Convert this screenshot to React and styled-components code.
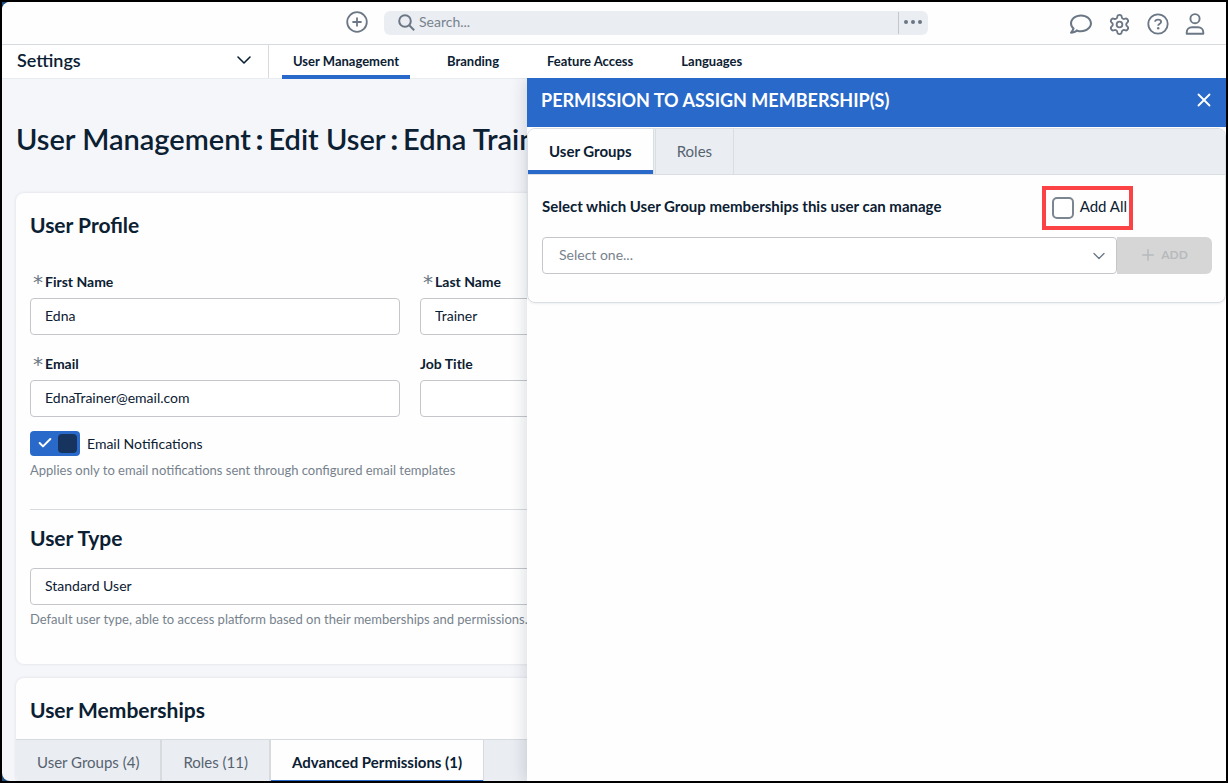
import React, { useState } from 'react';
import styled, { createGlobalStyle } from 'styled-components';
import { FaRegComment } from 'react-icons/fa';
import { Check, ChevronDown, Plus, Settings, X } from 'lucide-react';

const GlobalStyle = createGlobalStyle`
  * {
    box-sizing: border-box;
  }

  body {
    margin: 0;
    color: #0b2032;
    font-family: Lato, "Open Sans", sans-serif;
    font-size: 14px;
    line-height: 20px;
  }

  button, input, select {
    font: inherit;
    color: inherit;
  }

  h1, h2, p {
    margin: 0;
  }
`;

const Frame = styled.div`
  height: 100vh;
  border: 2px solid #000;
  background: #1d4f80;
`;

const Shell = styled.div`
  position: relative;
  display: flex;
  flex-direction: column;
  height: 100%;
  overflow: hidden;
  background: #f5f6fa;
  border-radius: 8px 0 0 8px;
`;

const TopBar = styled.header`
  display: grid;
  grid-template-columns: 1fr auto 1fr;
  flex: none;
  height: 43px;
  padding: 0 21px 1px 46px;
  background: #fefefe;
  border-bottom: 1px solid #d8dbde;
`;

const TopCenter = styled.div`
  grid-column: 2;
  display: flex;
  align-items: center;
  gap: 16px;
  margin-right: -21px;
`;

const IconButton = styled.button`
  display: flex;
  align-items: center;
  justify-content: center;
  padding: 0;
  border: none;
  background: none;
  color: ${({ $color }) => $color || '#6b7785'};
  cursor: pointer;
`;

const CreateButton = styled(IconButton)`
  padding-bottom: 2px;
`;

const SearchBox = styled.div`
  display: flex;
  align-items: center;
  width: min(544px, 50vw);
  height: 24px;
  padding-left: 14px;
  border-radius: 6px;
  background: #eaedf2;
  overflow: hidden;

  svg {
    flex: none;
  }

  input {
    flex: 1;
    min-width: 0;
    height: 22px;
    padding: 0 4px 2px;
    border: none;
    outline: none;
    background: none;

    &::placeholder {
      color: #77828d;
      opacity: 1;
    }
  }
`;

const MoreButton = styled(IconButton)`
  width: 30px;
  height: 22px;
  padding: 0 2px 2px 0;
  border-left: 1px solid #c4c8cc;
`;

const TopIcons = styled.div`
  grid-column: 3;
  display: flex;
  align-items: center;
  justify-content: flex-end;
  gap: 16px;
  padding-top: 3px;
`;

const SubNav = styled.div`
  display: flex;
  flex: none;
  height: 34px;
  background: #fff;
  border-bottom: 1px solid #e8ebef;
`;

const SectionButton = styled.button`
  display: flex;
  align-items: center;
  justify-content: space-between;
  width: 267px;
  padding: 0 12px 4px 15px;
  border: none;
  border-right: 1px solid #d8dbde;
  background: none;
  font-size: 18px;
  font-weight: 600;
`;

const NavLinks = styled.nav`
  display: flex;
  gap: 26px;
  margin-left: 13px;
`;

const NavItem = styled.a`
  display: flex;
  align-items: center;
  height: 34px;
  padding: 2px 11px 0;
  border-bottom: 4px solid ${({ $active }) => ($active ? '#2869c9' : 'transparent')};
  color: #0b2032;
  font-size: 13px;
  font-weight: 700;
  text-decoration: none;
`;

const Main = styled.main`
  flex: 1;
  min-height: 0;
  padding: 41px 32px 0 14px;
  overflow-y: auto;
  scrollbar-width: none;
`;

const PageTitle = styled.h1`
  display: flex;
  gap: 5px;
  margin-bottom: 35px;
  font-size: 29px;
  font-weight: 600;
  line-height: 38px;
  white-space: nowrap;

  b {
    font-weight: 900;
  }
`;

const Card = styled.section`
  margin-bottom: 14px;
  background: #fefefe;
  border-radius: 8px;
  box-shadow: 0 0 3px rgba(40, 60, 90, 0.14);
  overflow: hidden;
`;

const CardBody = styled.div`
  padding: 18px 14px ${({ $bottom }) => $bottom || 0}px;
`;

const CardTitle = styled.h2`
  font-size: 21px;
  font-weight: 700;
  line-height: 28px;
`;

const FieldGrid = styled.div`
  display: grid;
  grid-template-columns: repeat(3, 1fr);
  gap: 19px 20px;
  margin-top: 33px;
`;

const Field = styled.div`
  display: flex;
  flex-direction: column;
  gap: 6px;

  label {
    display: flex;
    gap: 2px;
    font-weight: 700;
  }

  &:nth-child(2) {
    grid-column: 2 / 4;
    width: calc(50% - 10px);
  }
`;

const Required = styled.span`
  padding-left: 3px;
  color: #6b7785;
  font-family: "DejaVu Sans", sans-serif;
  font-size: 20px;
  font-weight: 400;
`;

const TextInput = styled.input`
  width: 100%;
  height: 37px;
  padding: 0 14px 2px;
  border: 1px solid #c4c6c9;
  border-radius: 4px;
  background: #fff;
`;

const SwitchRow = styled.label`
  display: flex;
  align-items: center;
  gap: 7px;
  margin-top: 14px;
`;

const Switch = styled.span`
  position: relative;
  width: 50px;
  height: 25px;

  input {
    width: 50px;
    height: 25px;
    margin: 0;
    appearance: none;
    border-radius: 4px;
    background: #a9b1ba;

    &:checked {
      background: #2869c9;
    }
  }

  svg {
    position: absolute;
    top: 4px;
    left: 7px;
    color: #fff;
    pointer-events: none;
  }

  &::after {
    content: '';
    position: absolute;
    top: 3px;
    right: 3px;
    width: 19px;
    height: 19px;
    border-radius: 4px;
    background: #17345f;
    pointer-events: none;
  }
`;

const HelpText = styled.p`
  margin-top: 4px;
  color: #77828d;
  font-size: 13px;
`;

const Divider = styled.hr`
  margin: 29px 0 14px;
  border: none;
  border-top: 1px solid #d8dbde;
`;

const SelectBox = styled.div`
  position: relative;
  flex: 1;

  ${CardTitle} + & {
    margin-top: 16px;
  }

  select {
    width: 100%;
    height: 37px;
    padding: 0 ${({ $inset }) => $inset || 14}px 2px;
    appearance: none;
    border: 1px solid #c4c6c9;
    border-radius: 4px;
    background: #fff;
    color: ${({ $muted }) => ($muted ? '#77828d' : 'inherit')};
    opacity: 1;
  }

  svg {
    position: absolute;
    top: 9px;
    right: 8px;
    color: #6b7785;
    pointer-events: none;
  }
`;

const MembershipTabs = styled.div`
  display: flex;
  margin-top: 15px;
  background: #eaedf2;
  border-top: 1px solid #d8dbde;
`;

const MembershipTab = styled.button`
  height: 44px;
  padding: 3px 21px 0;
  border: none;
  border-right: ${({ $active }) => ($active ? 1 : 2)}px solid #d8dbde;
  border-bottom: 4px solid ${({ $active }) => ($active ? '#2869c9' : 'transparent')};
  background: ${({ $active }) => ($active ? '#fefefe' : 'none')};
  color: ${({ $active }) => ($active ? '#0b2032' : '#56636f')};
  font-size: 15px;
  font-weight: ${({ $active }) => ($active ? 700 : 400)};
`;

const Drawer = styled.aside`
  position: absolute;
  top: 76px;
  right: 0;
  bottom: 0;
  width: 699px;
  max-width: 100%;
  background: #fefefe;
  box-shadow: -2px 0 14px rgba(20, 40, 60, 0.16);
  clip-path: inset(0 0 0 -20px);
`;

const DrawerHeader = styled.div`
  display: flex;
  align-items: center;
  justify-content: space-between;
  height: 49px;
  padding: 0 11px 5px 14px;
  background: #2869c9;
  color: #fff;

  h2 {
    font-size: 18px;
    font-weight: 700;
    line-height: 24px;
  }
`;

const Panel = styled.div`
  margin-top: 1px;
  border: 1px solid #d9dee3;
  border-radius: 8px;
  box-shadow: 0 1px 2px rgba(40, 60, 90, 0.08);
  overflow: hidden;
`;

const DrawerTabs = styled.div`
  display: flex;
  gap: 1px;
  height: 46px;
  background: #eaedf2;
  border-bottom: 1px solid #d9dee3;
`;

const DrawerTab = styled.button`
  padding: 0 21px 2px;
  border: solid #d9dee3;
  border-width: 0 1px 0 ${({ $active }) => ($active ? 0 : 1)}px;
  background: ${({ $active }) => ($active ? '#fefefe' : 'none')};
  box-shadow: ${({ $active }) => ($active ? 'inset 0 -4px #2869c9' : 'none')};
  color: ${({ $active }) => ($active ? '#0b2032' : '#56636f')};
  font-size: 15px;
  font-weight: ${({ $active }) => ($active ? 700 : 400)};
`;

const PanelBody = styled.div`
  padding: 11px 13px 28px 14px;
`;

const AssignRow = styled.div`
  display: flex;
  align-items: center;
  justify-content: space-between;
  margin-bottom: 7px;
  padding-right: 79px;
  font-size: 15px;

  > label {
    padding-bottom: 4px;
    font-weight: 700;
  }
`;

const AddAll = styled.div`
  display: flex;
  align-items: center;
  gap: 6px;
  height: 44px;
  padding: 0 2px 0 6px;
  border: 4px solid #fb4245;

  label {
    padding-bottom: 4px;
  }

  input {
    width: 22px;
    height: 22px;
    margin: 0;
    appearance: none;
    border: 2px solid #7b8691;
    border-radius: 5px;
    background: #fff;

    &:checked {
      background: #2869c9;
    }
  }
`;

const AddRow = styled.div`
  display: flex;
`;

const AddButton = styled.button`
  display: flex;
  align-items: center;
  justify-content: center;
  gap: 4px;
  width: 95px;
  height: 37px;
  padding: 0 8px 2px 6px;
  border: none;
  border-radius: 0 6px 6px 0;
  background: #d6d6d6;
  color: #b6babd;
  font-size: 12px;
  font-weight: 700;
`;

const drawerTabs = ['User Groups', 'Roles'];
const membershipTabs = ['User Groups (4)', 'Roles (11)', 'Advanced Permissions (1)'];
const navItems = ['User Management', 'Branding', 'Feature Access', 'Languages'];

const CirclePlusIcon = () => (
  <svg width="22" height="22" viewBox="0 0 22 22" fill="none" stroke="currentColor" strokeWidth="1.8">
    <circle cx="11" cy="11" r="9.8" />
    <path d="M11 6.4v9.2M6.4 11h9.2" />
  </svg>
);

const SearchIcon = () => (
  <svg width="17" height="17" viewBox="0 0 17 17" fill="none" stroke="#6b7785" strokeWidth="2">
    <circle cx="7" cy="7" r="5.8" />
    <path d="M11.2 11.2l5 5" />
  </svg>
);

const DotsIcon = () => (
  <svg width="18" height="4" viewBox="0 0 18 4" fill="currentColor">
    <circle cx="2" cy="2" r="2" />
    <circle cx="9" cy="2" r="2" />
    <circle cx="16" cy="2" r="2" />
  </svg>
);

const HelpIcon = () => (
  <svg width="22" height="22" viewBox="0 0 22 22" fill="none" stroke="currentColor" strokeWidth="1.8">
    <circle cx="11" cy="11" r="9.7" />
    <path d="M8.1 8.8C8.2 7.3 9.3 6.7 11 6.7c1.9 0 3.1.9 3.1 2.3 0 1.8-2.9 1.9-2.9 3.8" />
    <circle cx="11.2" cy="15.3" r="1.2" fill="currentColor" stroke="none" />
  </svg>
);

const UserIcon = () => (
  <svg width="20" height="22" viewBox="0 0 20 22" fill="none" stroke="currentColor" strokeWidth="1.9" strokeLinejoin="round">
    <circle cx="10" cy="5.7" r="4.6" />
    <path d="M1.7 20.8v-1.3c0-3 2.3-5.2 5.2-5.2h6.2c2.9 0 5.2 2.2 5.2 5.2v1.3z" />
  </svg>
);

const FormField = ({ id, label, value, required }) => (
  <Field>
    <label htmlFor={id}>
      {required && <Required>*</Required>}
      {label}
    </label>
    <TextInput id={id} defaultValue={value} />
  </Field>
);

const App = () => {
  const [drawerTab, setDrawerTab] = useState('User Groups');
  const [membershipTab, setMembershipTab] = useState('Advanced Permissions (1)');
  const [open, setOpen] = useState(true);

  return (
    <Frame>
      <GlobalStyle />
      <Shell>
        <TopBar>
          <TopCenter>
            <CreateButton aria-label="Create"><CirclePlusIcon /></CreateButton>
            <SearchBox>
              <SearchIcon />
              <input type="search" aria-label="Search" placeholder="Search..." />
              <MoreButton aria-label="Search options"><DotsIcon /></MoreButton>
            </SearchBox>
          </TopCenter>
          <TopIcons>
            <IconButton aria-label="Messages"><FaRegComment size={22} /></IconButton>
            <IconButton aria-label="Settings"><Settings size={23} strokeWidth={1.9} /></IconButton>
            <IconButton aria-label="Help"><HelpIcon /></IconButton>
            <IconButton aria-label="Account"><UserIcon /></IconButton>
          </TopIcons>
        </TopBar>

        <SubNav>
          <SectionButton>
            Settings
            <ChevronDown size={24} strokeWidth={1.6} />
          </SectionButton>
          <NavLinks>
            {navItems.map((item) => (
              <NavItem key={item} href="#" $active={item === 'User Management'}>{item}</NavItem>
            ))}
          </NavLinks>
        </SubNav>

        <Main>
          <PageTitle>
            <span>User Management</span>
            <b>:</b>
            <span>Edit User</span>
            <b>:</b>
            <span>Edna Trainer</span>
          </PageTitle>

          <Card>
            <CardBody $bottom={35}>
              <CardTitle>User Profile</CardTitle>
              <FieldGrid>
                <FormField id="first-name" label="First Name" value="Edna" required />
                <FormField id="last-name" label="Last Name" value="Trainer" required />
                <FormField id="email" label="Email" value="EdnaTrainer@email.com" required />
                <FormField id="job-title" label="Job Title" value="" />
              </FieldGrid>
              <SwitchRow>
                <Switch>
                  <input type="checkbox" defaultChecked />
                  <Check size={16} strokeWidth={3} />
                </Switch>
                Email Notifications
              </SwitchRow>
              <HelpText>Applies only to email notifications sent through configured email templates</HelpText>
              <Divider />
              <CardTitle id="user-type">User Type</CardTitle>
              <SelectBox>
                <select aria-labelledby="user-type">
                  <option>Standard User</option>
                </select>
                <ChevronDown size={20} strokeWidth={1.6} />
              </SelectBox>
              <HelpText>Default user type, able to access platform based on their memberships and permissions.</HelpText>
            </CardBody>
          </Card>

          <Card>
            <CardBody>
              <CardTitle>User Memberships</CardTitle>
            </CardBody>
            <MembershipTabs>
              {membershipTabs.map((tab) => (
                <MembershipTab key={tab} $active={tab === membershipTab} onClick={() => setMembershipTab(tab)}>
                  {tab}
                </MembershipTab>
              ))}
            </MembershipTabs>
          </Card>
        </Main>

        {open && (
          <Drawer>
            <DrawerHeader>
              <h2>PERMISSION TO ASSIGN MEMBERSHIP(S)</h2>
              <IconButton $color="#fff" aria-label="Close" onClick={() => setOpen(false)}>
                <X size={22} strokeWidth={2} />
              </IconButton>
            </DrawerHeader>
            <Panel>
              <DrawerTabs>
                {drawerTabs.map((tab) => (
                  <DrawerTab key={tab} $active={tab === drawerTab} onClick={() => setDrawerTab(tab)}>
                    {tab}
                  </DrawerTab>
                ))}
              </DrawerTabs>
              <PanelBody>
                <AssignRow>
                  <label htmlFor="group">Select which User Group memberships this user can manage</label>
                  <AddAll>
                    <input id="add-all" type="checkbox" />
                    <label htmlFor="add-all">Add All</label>
                  </AddAll>
                </AssignRow>
                <AddRow>
                  <SelectBox $muted $inset={16}>
                    <select id="group">
                      <option>Select one...</option>
                    </select>
                    <ChevronDown size={20} strokeWidth={1.6} />
                  </SelectBox>
                  <AddButton disabled>
                    <Plus size={18} strokeWidth={2} />
                    ADD
                  </AddButton>
                </AddRow>
              </PanelBody>
            </Panel>
          </Drawer>
        )}
      </Shell>
    </Frame>
  );
};

export default App;
